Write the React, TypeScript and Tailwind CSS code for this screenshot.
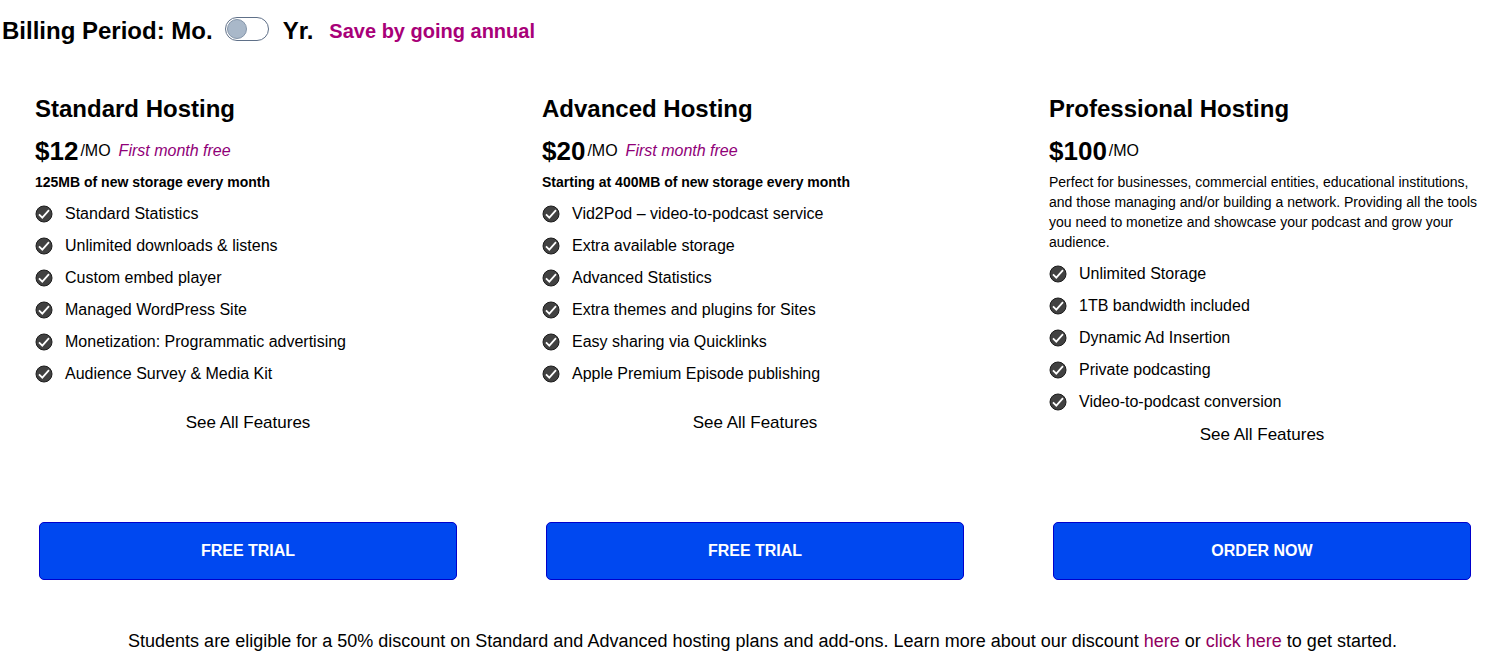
import { useState } from 'react'

type Plan = {
  name: string
  price: string
  promo?: string
  storage?: string
  description?: string
  features: string[]
  action: string
}

const plans: Plan[] = [
  {
    name: 'Standard Hosting',
    price: '$12',
    promo: 'First month free',
    storage: '125MB of new storage every month',
    features: [
      'Standard Statistics',
      'Unlimited downloads & listens',
      'Custom embed player',
      'Managed WordPress Site',
      'Monetization: Programmatic advertising',
      'Audience Survey & Media Kit'
    ],
    action: 'FREE TRIAL'
  },
  {
    name: 'Advanced Hosting',
    price: '$20',
    promo: 'First month free',
    storage: 'Starting at 400MB of new storage every month',
    features: [
      'Vid2Pod – video-to-podcast service',
      'Extra available storage',
      'Advanced Statistics',
      'Extra themes and plugins for Sites',
      'Easy sharing via Quicklinks',
      'Apple Premium Episode publishing'
    ],
    action: 'FREE TRIAL'
  },
  {
    name: 'Professional Hosting',
    price: '$100',
    description:
      'Perfect for businesses, commercial entities, educational institutions, and those managing and/or building a network. Providing all the tools you need to monetize and showcase your podcast and grow your audience.',
    features: [
      'Unlimited Storage',
      '1TB bandwidth included',
      'Dynamic Ad Insertion',
      'Private podcasting',
      'Video-to-podcast conversion'
    ],
    action: 'ORDER NOW'
  }
]

const CheckIcon = () => (
  <svg viewBox="0 0 18 18" className="w-[18px] h-[18px] shrink-0" aria-hidden="true">
    <circle cx="9" cy="9" r="8" fill="#414141" stroke="#1c1c1c" strokeWidth="1" />
    <path d="M4 9.4l3.3 3.2 6.7-7.4" fill="none" stroke="#fff" strokeWidth="1.8" />
  </svg>
)

const PlanCard = ({ plan }: { plan: Plan }) => (
  <section className="flex flex-col">
    <h2 className="text-[24px] leading-8 font-bold">{plan.name}</h2>
    <p className="flex items-center mt-2 h-9">
      <span className="text-[26px] font-bold">{plan.price}</span>
      <span className="ml-[2px]">/MO</span>
      {plan.promo && <em className="ml-2 text-[#900078]">{plan.promo}</em>}
    </p>
    {plan.storage && <p className="mt-[3px] text-sm leading-5 font-bold">{plan.storage}</p>}
    {plan.description && <p className="mt-[3px] -mr-2 text-sm leading-5">{plan.description}</p>}
    <ul className="mt-[6px]">
      {plan.features.map(feature => (
        <li key={feature} className="flex items-center h-8">
          <CheckIcon />
          <span className="ml-3">{feature}</span>
        </li>
      ))}
    </ul>
    <a href="#features" className={`self-center text-[17px] leading-[34px] ${plan.storage ? 'mt-4' : ''}`}>
      See All Features
    </a>
    <div className="mt-auto px-1">
      <button
        type="button"
        className="w-full h-[58px] rounded-[5px] border border-[#0000cc] bg-[#0048f0] text-base font-bold text-white cursor-pointer"
      >
        {plan.action}
      </button>
    </div>
  </section>
)

export default function App() {
  const [annual, setAnnual] = useState(false)

  return (
    <main className="bg-white text-black text-base font-['Liberation_Sans',Arial,sans-serif] pb-2 overflow-x-hidden">
      <div className="flex items-center pl-[2px] h-[62px] text-[24px] font-bold">
        <span>Billing Period: Mo.</span>
        <label className="relative ml-3 mr-[14px] mb-1 block w-[44px] h-6 shrink-0 cursor-pointer">
          <input
            type="checkbox"
            role="switch"
            aria-label="Bill annually"
            checked={annual}
            onChange={e => setAnnual(e.target.checked)}
            className="peer block w-full h-full appearance-none rounded-full border border-[#5f7088] bg-white cursor-pointer"
          />
          <span className="absolute top-[2px] left-[2px] w-5 h-5 rounded-full border border-[#8495a9] bg-[#a9b8c9] pointer-events-none peer-checked:left-[22px]" />
        </label>
        <span>Yr.</span>
        <span className="ml-4 text-[20px] text-[#a80078]">Save by going annual</span>
      </div>

      <div className="grid grid-cols-3 gap-[81px] pl-[35px] pr-[34px] pt-[31px] min-h-[518px]">
        {plans.map(plan => (
          <PlanCard key={plan.name} plan={plan} />
        ))}
      </div>

      <p className="mt-12 text-center text-lg leading-[26px] pl-4">
        Students are eligible for a 50% discount on Standard and Advanced hosting plans and add-ons. Learn more about our
        discount <a href="#discount" className="text-[#900060]">here</a> or{' '}
        <a href="#apply" className="text-[#900060]">click here</a> to get started.
      </p>
    </main>
  )
}
